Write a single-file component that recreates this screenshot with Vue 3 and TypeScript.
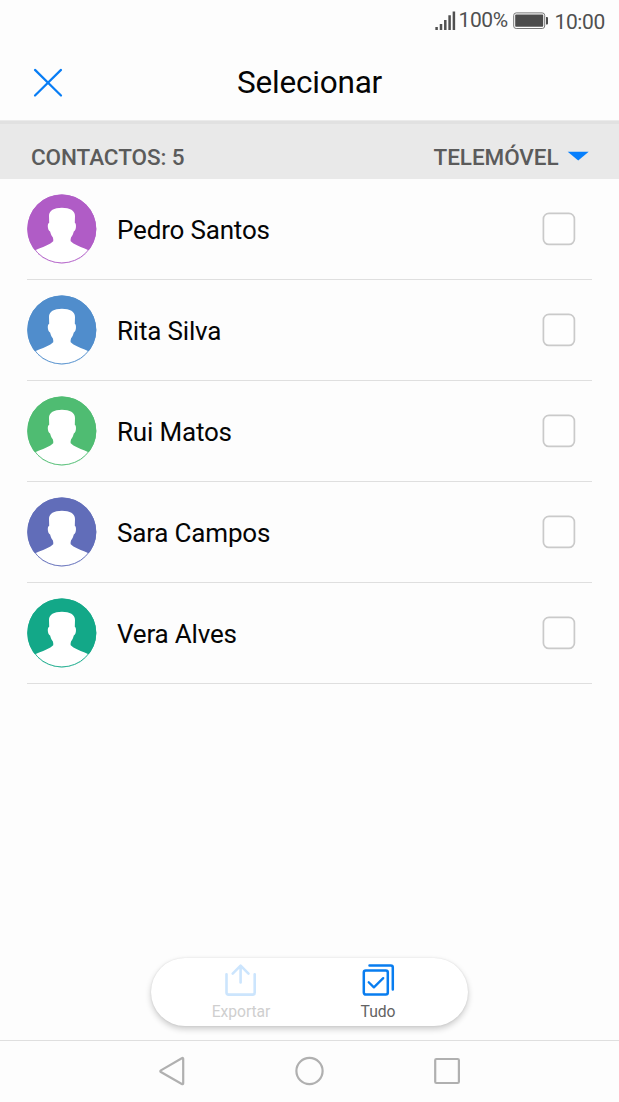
<script setup lang="ts">
interface Contact {
  name: string
  color: string
}

const contacts: Contact[] = [
  { name: 'Pedro Santos', color: '#b05cc6' },
  { name: 'Rita Silva', color: '#508dcc' },
  { name: 'Rui Matos', color: '#4fbc72' },
  { name: 'Sara Campos', color: '#616db9' },
  { name: 'Vera Alves', color: '#13a888' },
]
</script>

<template>
  <div class="screen">
    <div class="status">
      <svg class="signal" width="21" height="20" viewBox="0 0 21 20">
        <path d="M1.600 18.900v-3M6 18.900v-6M10.300 18.900v-10M14.600 18.900V4.200M18.900 18.900V0.400" fill="none" stroke="#505050" stroke-width="2.500" />
      </svg>
      <span class="percent">100%</span>
      <svg class="battery" width="36" height="18" viewBox="0 0 36 18">
        <rect x="0.700" y="0.900" width="31" height="15.600" rx="2.500" fill="#fff" stroke="#777" stroke-width="1" />
        <rect x="2.200" y="2.600" width="28" height="12.200" rx="0.800" fill="#4c4c4c" />
        <path d="M33 5h1q1 0 1 1v5.500q0 1-1 1H33z" fill="#4c4c4c" />
      </svg>
      <span class="clock">10:00</span>
    </div>

    <header class="header">
      <svg class="close" width="30" height="30" viewBox="0 0 30 30">
        <path d="M2 1.900L28 27.500M28 1.900L2 27.500" fill="none" stroke="#087df5" stroke-width="2.200" stroke-linecap="round" />
      </svg>
      <h1 class="title">Selecionar</h1>
    </header>

    <div class="section">
      <span class="count">CONTACTOS: 5</span>
      <span class="source">TELEMÓVEL</span>
      <svg class="arrow" width="22" height="10" viewBox="0 0 22 10">
        <path d="M0.700 0.700H21.700L11.200 9.500z" fill="#067ffc" />
      </svg>
    </div>

    <ul class="list">
      <li v-for="contact in contacts" :key="contact.name" class="row">
        <svg class="avatar" width="70" height="70" viewBox="0 0 70 70">
          <circle cx="34.800" cy="34.900" r="34.500" :fill="contact.color" />
          <path
            fill="#fff"
            d="M22 22C22 16.500 27 13.700 34.900 13.700S48 16.500 48 22L47.800 28.700C49.100 29.400 49.100 31.500 48.900 33.500C48.500 36 47.700 37.200 46.800 37.500C46.200 40 45.200 42 44 43.500C43.600 45.200 43.500 46 43.700 47.200L46.500 49.500C51 52 56 53.800 62 56.500L59.500 60L10 60L7.600 56.500C14 53.800 18.800 52 23.400 49.500L26.200 47.200C26.400 46 26.300 45.200 25.900 43.500C24.700 42 23.700 40 23.100 37.500C22.200 37.200 21.300 36 20.900 33.500C20.700 31.500 20.700 29.400 22.200 28.700z"
          />
          <path d="M7.800 56.300H61.800A34.300 34.300 0 0 1 7.800 56.300z" fill="#fff" />
          <circle cx="34.800" cy="34.900" r="34" fill="none" :stroke="contact.color" stroke-width="0.900" />
        </svg>
        <span class="name">{{ contact.name }}</span>
        <svg class="checkbox" width="34" height="34" viewBox="0 0 34 34">
          <rect x="1.400" y="1.400" width="31" height="31" rx="5.500" fill="#fff" fill-opacity="0.500" stroke="#cacaca" stroke-width="1.700" />
        </svg>
      </li>
    </ul>

    <div class="dock">
      <div class="toolbar">
        <div class="action disabled">
          <svg width="34" height="34" viewBox="0 0 34 34" fill="none" stroke="#cce5fd" stroke-width="2.600" stroke-linecap="round" stroke-linejoin="round">
            <path d="M2.500 11.300V29.500Q2.500 31.600 4.600 31.600H28.600Q30.700 31.600 30.700 29.500V11.300" />
            <path d="M16.600 19.500V3M8.700 10.600L16.600 2.700L24.500 10.600" />
          </svg>
          <span>Exportar</span>
        </div>
        <div class="action">
          <svg width="34" height="34" viewBox="0 0 34 34" fill="none" stroke="#087df0" stroke-width="2.500" stroke-linecap="round" stroke-linejoin="round">
            <rect x="2.800" y="7.400" width="24" height="24.200" rx="2" />
            <path d="M8.500 2.500H29.800Q31.800 2.500 31.800 4.500V26.500" />
            <path d="M7.700 19.200L12.900 24.400L22.200 15.100" stroke-width="2.300" />
          </svg>
          <span>Tudo</span>
        </div>
      </div>
    </div>

    <nav class="nav">
      <svg width="30" height="32" viewBox="0 0 30 32" fill="none" stroke="#b0b0b0" stroke-width="2.200">
        <path d="M27.200 3.800V28.200Q27.200 29.700 25.800 29L4.900 17Q3.700 16.200 4.900 15.400L25.800 3.200Q27.200 2.500 27.200 3.800z" />
      </svg>
      <svg width="30" height="32" viewBox="0 0 30 32" fill="none" stroke="#b0b0b0" stroke-width="2.200">
        <circle cx="15.500" cy="16" r="13.100" />
      </svg>
      <svg width="30" height="32" viewBox="0 0 30 32" fill="none" stroke="#b0b0b0" stroke-width="2.200">
        <rect x="3.200" y="4" width="23.700" height="24" rx="1.200" />
      </svg>
    </nav>
  </div>
</template>

<style>
body {
  background: #fdfdfd;
}
</style>

<style scoped>
.screen {
  display: flex;
  flex-direction: column;
  width: 619px;
  height: 1102px;
  overflow: hidden;
  background: #fdfdfd;
  font-family: Roboto, "Liberation Sans", sans-serif;
  color: #050505;
}

.status {
  display: flex;
  align-items: center;
  height: 41px;
  padding-left: 435px;
  font-size: 21px;
  letter-spacing: -0.400px;
  line-height: 24px;
  color: #505050;
  white-space: nowrap;
}

.percent {
  width: 53.500px;
  margin: -1px 0 0 2.500px;
}

.battery {
  flex: none;
  margin-left: 1px;
}

.clock {
  margin-left: 5.500px;
  padding-top: 2px;
}

.header {
  display: grid;
  grid-template-columns: 63px 1fr 63px;
  align-items: center;
  height: 79px;
}

.close {
  margin: 4px 0 0 33px;
}

.title {
  margin: 4px 0 0;
  text-align: center;
  font-size: 31.500px;
  font-weight: 400;
  letter-spacing: -0.200px;
  line-height: 38px;
}

.section {
  box-sizing: border-box;
  display: flex;
  align-items: center;
  height: 59px;
  padding: 13px 30px 0 31px;
  border-top: 1px solid #ebebeb;
  box-shadow: inset 0 3px #e1e1e1;
  background: #e9e9e9;
  font-size: 22.500px;
  font-weight: 500;
  letter-spacing: -0.080px;
  line-height: 28px;
  color: #5b5b5b;
}

.count {
  flex: 1;
}

.arrow {
  margin: 0 0 2px 8.500px;
}

.list {
  flex: 1;
  margin: 0;
  padding: 0 27px 0 27px;
  list-style: none;
}

.row {
  box-sizing: border-box;
  display: flex;
  align-items: center;
  height: 101px;
  border-bottom: 1px solid #dfdfdf;
}

.avatar {
  flex: none;
}

.name {
  flex: 1;
  margin: 2px 0 0 20px;
  font-size: 26px;
  letter-spacing: -0.180px;
  line-height: 32px;
}

.checkbox {
  flex: none;
  margin-right: 16px;
}

.dock {
  display: flex;
  justify-content: center;
  padding-bottom: 14px;
}

.toolbar {
  box-sizing: border-box;
  display: flex;
  justify-content: center;
  width: 317px;
  height: 68px;
  border-radius: 34px;
  background: #fff;
  box-shadow: 0 3px 6px rgba(0, 0, 0, 0.2), 0 0 2px rgba(0, 0, 0, 0.1);
}

.action {
  display: flex;
  flex-direction: column;
  align-items: center;
  width: 137px;
  padding-top: 5px;
  font-size: 15.700px;
  letter-spacing: -0.080px;
  line-height: 20px;
  color: #636363;
}

.action span {
  margin-top: 5px;
}

.disabled {
  color: #cfcfcf;
}

.nav {
  box-sizing: border-box;
  display: flex;
  justify-content: center;
  gap: 108px;
  height: 62px;
  padding: 14px 1px 0 0;
  border-top: 1px solid #dfdfdf;
}
</style>
